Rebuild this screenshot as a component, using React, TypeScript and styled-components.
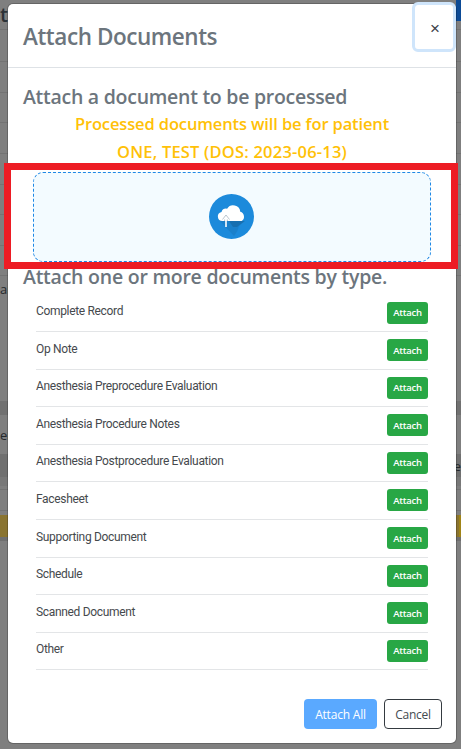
import React from "react";
import styled, { createGlobalStyle } from "styled-components";

const Global = createGlobalStyle`
  html, body { margin: 0; padding: 0; width: 461px; height: 749px; overflow: hidden; background: #7f7f7f; }
  * { box-sizing: border-box; }
  body { font-family: "Open Sans", "Noto Sans", sans-serif; }
`;
const Page = styled.div`
  position: relative;
  width: 461px;
  height: 749px;
  padding: 4px 5px 6px 8px;
  overflow: hidden;
`;
const Backdrop = styled.div`
  position: absolute;
  inset: 0;
  display: flex;
  flex-direction: column;
`;
const BackRow = styled.div<{ $h: number; $bg?: string; $line?: boolean }>`
  flex: none;
  height: ${(p) => p.$h}px;
  background: ${(p) => p.$bg || "transparent"};
  border-bottom: ${(p) => (p.$line ? "1px solid #737373" : "0")};
  display: flex;
  align-items: center;
  justify-content: space-between;
  overflow: hidden;
  color: #24282c;
  font-size: 13px;
  white-space: nowrap;
`;
const BackTitle = styled.span`
  font-size: 20px;
  font-weight: 600;
  color: #2c3136;
`;
const Accent = styled.span`
  align-self: flex-start;
  width: 5px;
  height: 21px;
  background: #0b4a96;
`;
const RightBits = styled.span`
  color: #24282c;
  font-size: 13px;
`;
const YellowEdge = styled.span`
  align-self: stretch;
  width: 2px;
  background: #a08417;
`;
const Modal = styled.div`
  position: relative;
  height: 739px;
  background: #fff;
  border-radius: 5px;
  box-shadow: 0 0 0 1px rgba(0, 0, 0, 0.2);
  display: flex;
  flex-direction: column;
`;
const Header = styled.header`
  height: 64px;
  flex: none;
  border-bottom: 1px solid #dee2e6;
  padding: 1px 15px 0;
  display: flex;
  align-items: center;
  justify-content: space-between;
`;
const Title = styled.h4`
  margin: 0;
  font-size: 22.5px;
  font-weight: 600;
  color: #6c757d;
  letter-spacing: -0.45px;
`;
const Close = styled.button`
  position: absolute;
  top: -2px;
  right: 0;
  width: 44px;
  height: 50px;
  border: 3px solid #cfe5fb;
  border-radius: 6px;
  background: #fff;
  color: #3c4248;
  font-size: 17px;
  font-family: "Liberation Sans", sans-serif;
  padding: 3px 0 0 2px;
`;
const Body = styled.div`
  flex: 1;
  padding: 15px 15px 0;
  display: flex;
  flex-direction: column;
`;
const Sub = styled.h5`
  margin: 0;
  font-size: 19.5px;
  line-height: 27px;
  font-weight: 600;
  color: #6c757d;
  letter-spacing: -0.27px;
`;
const Notice = styled.div`
  text-align: center;
  color: #ffc107;
  font-size: 16.5px;
  line-height: 28px;
  font-weight: 600;
  letter-spacing: -0.13px;
`;
const PatientLine = styled.div`
  letter-spacing: 0.2px;
`;
const Drop = styled.div`
  margin: 6px 10px 0;
  height: 90px;
  border: 1px dashed #1e88e5;
  border-radius: 10px;
  background: #f3fbff;
  display: flex;
  align-items: center;
  justify-content: center;
  svg {
    margin: 0 2px 2px 0;
  }
`;
const TypeHeading = styled(Sub)`
  margin-top: 1px;
  letter-spacing: -0.24px;
`;
const List = styled.ul`
  list-style: none;
  margin: 4.5px 13px 0;
  padding: 0;
`;
const Row = styled.li`
  height: 37.6px;
  border-bottom: 1px solid #e3e5e7;
  display: flex;
  align-items: flex-start;
  justify-content: space-between;
  padding-top: 7px;
`;
const Label = styled.span`
  font-family: Roboto, sans-serif;
  font-size: 12px;
  line-height: 17px;
  margin-top: 1.5px;
  color: #45494d;
  letter-spacing: -0.33px;
`;
const AttachBtn = styled.button`
  width: 41px;
  height: 22px;
  border: 0;
  border-radius: 3px;
  background: #28a745;
  color: #fff;
  font: 600 9.5px "Open Sans", sans-serif;
  letter-spacing: -0.3px;
  padding: 0;
`;
const Footer = styled.footer`
  display: flex;
  justify-content: flex-end;
  gap: 7px;
  padding: 0 14px 14px 0;
`;
const Primary = styled.button`
  width: 73px;
  height: 30px;
  border: 0;
  border-radius: 4px;
  background: #5aa9ff;
  color: #fff;
  font: 400 12px "Open Sans", sans-serif;
  letter-spacing: -0.2px;
`;
const Outline = styled.button`
  width: 58px;
  height: 30px;
  border: 1px solid #343a40;
  border-radius: 4px;
  background: #fff;
  color: #444a50;
  font: 400 12px "Open Sans", sans-serif;
  letter-spacing: -0.3px;
`;
const Annotation = styled.div`
  position: absolute;
  left: 4px;
  top: 163px;
  width: 454px;
  height: 106px;
  border: 7px solid #ed1c24;
  pointer-events: none;
`;

const docs = [
  "Complete Record",
  "Op Note",
  "Anesthesia Preprocedure Evaluation",
  "Anesthesia Procedure Notes",
  "Anesthesia Postprocedure Evaluation",
  "Facesheet",
  "Supporting Document",
  "Schedule",
  "Scanned Document",
  "Other",
];

const UploadIcon = () => (
  <svg width="45" height="45" viewBox="0 0 45 45" aria-hidden="true">
    <circle cx="22.5" cy="22.5" r="22.5" fill="#1c8adb" />
    <path d="M10 26 L25 42 A20 20 0 0 0 30 32 L36 27 Z" fill="#1873b8" opacity="0.45" />
    <path d="M20 27 H35.5 L28 33 H24 Z" fill="#176aa9" opacity="0.8" />
    <path
      d="M13.5 27 a4.6 4.6 0 0 1 -1 -9.1 a5 5 0 0 1 5.6 -3.2 a7.2 7.2 0 0 1 13.2 3 a5.2 5.2 0 0 1 1.4 9.3 Z"
      fill="#fff"
    />
    <path d="M17 33 V24" fill="none" stroke="#fff" strokeWidth="1.6" />
    <path d="M13.5 25.5 L17 21 L20.5 25.5 M15.6 25.5 V27 M18.4 25.5 V27" fill="none" stroke="#aab6c2" strokeWidth="0.8" />
  </svg>
);

const backRows: { h: number; bg?: string; line?: boolean; left?: React.ReactNode; right?: React.ReactNode }[] = [
  { h: 30, line: true, left: <BackTitle>t</BackTitle>, right: <Accent /> },
  { h: 32, line: true },
  { h: 31, line: true },
  { h: 30, line: true },
  { h: 31, line: true },
  { h: 31, line: true },
  { h: 30, line: true },
  { h: 31, line: true },
  { h: 30, line: true },
  { h: 26, left: "ar" },
  { h: 99 },
  { h: 14, bg: "#717171" },
  { h: 39, left: "en" },
  { h: 23, bg: "#707070", right: <RightBits>e</RightBits> },
  { h: 9, bg: "#787878" },
  { h: 4, line: true },
  { h: 21, line: true },
  { h: 4 },
  { h: 22, bg: "#8a7430", right: <YellowEdge /> },
  { h: 4, bg: "#6f6f6f" },
];

export default function App() {
  return (
    <>
      <Global />
      <Page>
        <Backdrop>
          {backRows.map((r, i) => (
            <BackRow key={i} $h={r.h} $bg={r.bg} $line={r.line}>
              <span>{r.left}</span>
              {r.right}
            </BackRow>
          ))}
        </Backdrop>
        <Modal>
          <Header>
            <Title>Attach Documents</Title>
            <Close aria-label="Close">×</Close>
          </Header>
          <Body>
            <Sub>Attach a document to be processed</Sub>
            <Notice>
              Processed documents will be for patient
              <PatientLine>ONE, TEST (DOS: 2023-06-13)</PatientLine>
            </Notice>
            <Drop>
              <UploadIcon />
            </Drop>
            <TypeHeading>Attach one or more documents by type.</TypeHeading>
            <List>
              {docs.map((d) => (
                <Row key={d}>
                  <Label>{d}</Label>
                  <AttachBtn>Attach</AttachBtn>
                </Row>
              ))}
            </List>
          </Body>
          <Footer>
            <Primary>Attach All</Primary>
            <Outline>Cancel</Outline>
          </Footer>
        </Modal>
        <Annotation />
      </Page>
    </>
  );
}
